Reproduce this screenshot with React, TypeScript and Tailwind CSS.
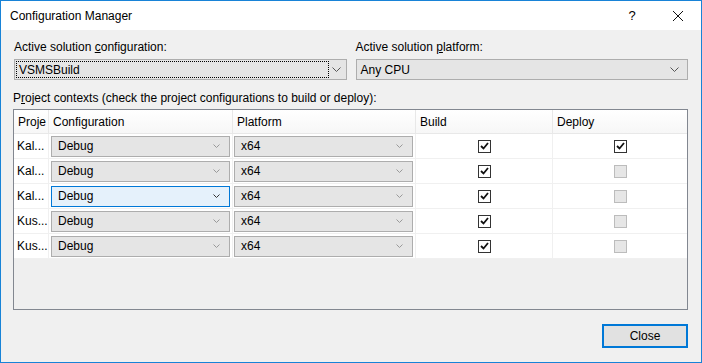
import React from "react";

const font = { fontFamily: '"Segoe UI", "Liberation Sans", Arial, sans-serif' };

function Chevron({ className = "", small }: { className?: string; small?: boolean }) {
  if (small) {
    return (
      <svg width="7" height="4" viewBox="0 0 7 4" className={className}>
        <path d="M0.5 0.5 L3.5 3.5 L6.5 0.5" fill="none" stroke="currentColor" strokeWidth="1" />
      </svg>
    );
  }
  return (
    <svg width="9" height="5" viewBox="0 0 9 5" className={className}>
      <path d="M0.5 0.5 L4.5 4.5 L8.5 0.5" fill="none" stroke="currentColor" strokeWidth="1" />
    </svg>
  );
}

function CellCombo({ value, hover }: { value: string; hover?: boolean }) {
  return (
    <div
      className={
        "flex h-[21px] w-full items-center justify-between border pl-[6px] pr-[9px] " +
        (hover ? "border-[#0078d7] bg-[#e5f1fb]" : "border-[#adadad] bg-[#e5e5e5]")
      }
    >
      <span>{value}</span>
      <Chevron small className={hover ? "text-[#333]" : "text-[#999]"} />
    </div>
  );
}

function Check({ checked, disabled }: { checked?: boolean; disabled?: boolean }) {
  if (disabled) {
    return <div className="h-[13px] w-[13px] border border-[#bcbcbc] bg-[#e6e6e6]" />;
  }
  return (
    <div className="flex h-[13px] w-[13px] items-center justify-center border border-[#333] bg-white">
      {checked && (
        <svg width="9" height="8" viewBox="0 0 9 8">
          <path d="M1 4 L3.5 6.5 L8 1" fill="none" stroke="#111" strokeWidth="1.8" />
        </svg>
      )}
    </div>
  );
}

const rows = [
  { name: "Kal...", deploy: true, hover: false },
  { name: "Kal...", deploy: false, hover: false },
  { name: "Kal...", deploy: false, hover: true },
  { name: "Kus...", deploy: false, hover: false },
  { name: "Kus...", deploy: false, hover: false },
];

export default function App() {
  return (
    <div
      style={font}
      className="flex h-[363px] w-[702px] flex-col border border-[#1883d7] bg-[#f0f0f0] text-[12px] text-black"
    >
      {/* title bar */}
      <div className="flex h-[29px] items-center bg-white pl-[9px]">
        <span className="flex-1">Configuration Manager</span>
        <span className="w-[46px] text-center text-[13px]">?</span>
        <span className="flex w-[46px] justify-center">
          <svg width="10" height="10" viewBox="0 0 10 10">
            <path d="M0 0 L10 10 M10 0 L0 10" stroke="#111" strokeWidth="1" />
          </svg>
        </span>
      </div>

      <div className="flex flex-1 flex-col pl-[12px] pr-[13px]">
        <div className="mt-[10px] flex gap-[9px]">
          <div className="flex flex-1 flex-col pl-[1px]">
            <span className="h-[19px] leading-[14px]">
              Active solution <u>c</u>onfiguration:
            </span>
            <div className="flex h-[21px] items-center border border-[#adadad] bg-[#e5e5e5] p-[1px]">
              <div className="flex h-full flex-1 items-center border border-dotted border-black pl-[2px]">
                VSMSBuild
              </div>
              <div className="flex w-[16px] justify-center">
                <Chevron className="text-[#555]" />
              </div>
            </div>
          </div>
          <div className="flex flex-1 flex-col">
            <span className="h-[19px] leading-[14px]">
              Active solution <u>p</u>latform:
            </span>
            <div className="flex h-[21px] items-center justify-between border border-[#adadad] bg-[#e5e5e5] pl-[4px] pr-[8px]">
              <span>Any CPU</span>
              <Chevron className="text-[#555]" />
            </div>
          </div>
        </div>

        <span className="mt-[11px] h-[18px] leading-[14px]">
          P<u>r</u>oject contexts (check the project configurations to build or deploy):
        </span>

        {/* grid */}
        <div className="flex h-[201px] flex-col border border-[#828790] bg-[#efefef]">
          <div className="grid h-[24px] grid-cols-[35px_184px_183px_137px_1fr] border-b border-[#e8e8e8] bg-gradient-to-b from-white to-[#f7f7f7]">
            <div className="flex items-center border-r border-[#e8e8e8] pl-[4px]">Proje</div>
            <div className="flex items-center border-r border-[#e8e8e8] pl-[4px]">Configuration</div>
            <div className="flex items-center border-r border-[#e8e8e8] pl-[4px]">Platform</div>
            <div className="flex items-center border-r border-[#e8e8e8] pl-[4px]">Build</div>
            <div className="flex items-center pl-[4px]">Deploy</div>
          </div>
          {rows.map((r, i) => (
            <div
              key={i}
              className="grid h-[25px] grid-cols-[35px_184px_183px_137px_1fr] border-b border-[#f0f0f0] bg-white"
            >
              <div className="flex items-center border-r border-[#f0f0f0] pl-[3px]">{r.name}</div>
              <div className="flex items-center border-r border-[#f0f0f0] pl-[2px] pr-[2px]">
                <CellCombo value="Debug" hover={r.hover} />
              </div>
              <div className="flex items-center border-r border-[#f0f0f0] pl-[1px] pr-[2px]">
                <CellCombo value="x64" />
              </div>
              <div className="flex items-center justify-center border-r border-[#f0f0f0]">
                <Check checked />
              </div>
              <div className="flex items-center justify-center">
                <Check checked={r.deploy} disabled={!r.deploy} />
              </div>
            </div>
          ))}
        </div>

        <div className="mt-[14px] flex justify-end">
          <button
            type="button"
            className="h-[24px] w-[86px] border-2 border-[#0078d7] bg-[#e1e1e1] text-[12px]"
          >
            Close
          </button>
        </div>
      </div>
    </div>
  );
}
